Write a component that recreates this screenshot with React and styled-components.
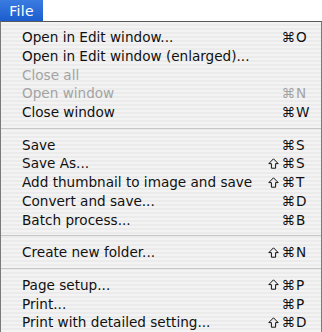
import React from "react";
import styled, { createGlobalStyle } from "styled-components";

const GlobalStyle = createGlobalStyle`
  html, body {
    margin: 0;
    padding: 0;
    background: #ffffff;
  }
  body {
    font-family: "DejaVu Sans", "Liberation Sans", sans-serif;
    -webkit-font-smoothing: antialiased;
  }
`;

// one entry per menu line; "sep" draws a divider
const items = [
  { label: "Open in Edit window...", key: "O" },
  { label: "Open in Edit window (enlarged)..." },
  { label: "Close all", disabled: true },
  { label: "Open window", key: "N", disabled: true },
  { label: "Close window", key: "W" },
  { sep: true },
  { label: "Save", key: "S" },
  { label: "Save As...", shift: true, key: "S" },
  { label: "Add thumbnail to image and save", shift: true, key: "T" },
  { label: "Convert and save...", key: "D" },
  { label: "Batch process...", key: "B" },
  { sep: true },
  { label: "Create new folder...", shift: true, key: "N" },
  { sep: true },
  { label: "Page setup...", shift: true, key: "P" },
  { label: "Print...", key: "P" },
  { label: "Print with detailed setting...", shift: true, key: "D" },
];

const Screen = styled.div`
  width: 322px;
  height: 332px;
  overflow: hidden;
  display: flex;
  flex-direction: column;
`;

const MenuBar = styled.div`
  height: 21px;
  display: flex;
  background: #ffffff;
`;

const MenuTitle = styled.div`
  width: 43px;
  height: 21px;
  display: flex;
  align-items: center;
  justify-content: center;
  background: linear-gradient(#3a7be0, #1c5dcf);
  color: #ffffff;
  font-size: 14px;
  letter-spacing: 0.3px;
`;

const Menu = styled.div`
  flex: 1;
  border-top: 1px solid #5a5a5a;
  border-left: 1px solid #7a7a7a;
  border-right: 1px solid #7a7a7a;
  padding-top: 6px;
  background: repeating-linear-gradient(
    to bottom,
    #f3f3f3 0px,
    #f3f3f3 2px,
    #ebebeb 2px,
    #ebebeb 4px
  );
`;

const Row = styled.div`
  height: 18.7px;
  display: flex;
  align-items: center;
  padding: 0 12px 0 21px;
  font-size: 13.6px;
  color: ${(p) => (p.disabled ? "#a3a3a3" : "#111111")};
  white-space: nowrap;
`;

const Label = styled.span`
  flex: 1;
`;

const Shortcut = styled.span`
  display: flex;
  align-items: center;
`;

const ShiftSlot = styled.span`
  width: 13px;
  display: flex;
  align-items: center;
  justify-content: flex-start;
`;

const Cmd = styled.span`
  margin-right: 1px;
`;

const Key = styled.span`
  width: 13px;
  text-align: left;
`;

const Separator = styled.div`
  height: 14px;
  display: flex;
  align-items: center;
  &::after {
    content: "";
    flex: 1;
    height: 1px;
    background: #c6c6c6;
  }
`;

function ShiftIcon() {
  return (
    <svg width="11" height="11" viewBox="0 0 11 11">
      <path
        d="M5.5 0.8 L10.2 5.6 L7.6 5.6 L7.6 10.2 L3.4 10.2 L3.4 5.6 L0.8 5.6 Z"
        fill="none"
        stroke="currentColor"
        strokeWidth="1"
        strokeLinejoin="miter"
      />
    </svg>
  );
}

export default function App() {
  return (
    <Screen>
      <GlobalStyle />
      <MenuBar>
        <MenuTitle>File</MenuTitle>
      </MenuBar>
      <Menu>
        {items.map((item, i) =>
          item.sep ? (
            <Separator key={i} />
          ) : (
            <Row key={i} disabled={item.disabled}>
              <Label>{item.label}</Label>
              {item.key && (
                <Shortcut>
                  <ShiftSlot>{item.shift && <ShiftIcon />}</ShiftSlot>
                  <Cmd>⌘</Cmd>
                  <Key>{item.key}</Key>
                </Shortcut>
              )}
            </Row>
          )
        )}
      </Menu>
    </Screen>
  );
}
